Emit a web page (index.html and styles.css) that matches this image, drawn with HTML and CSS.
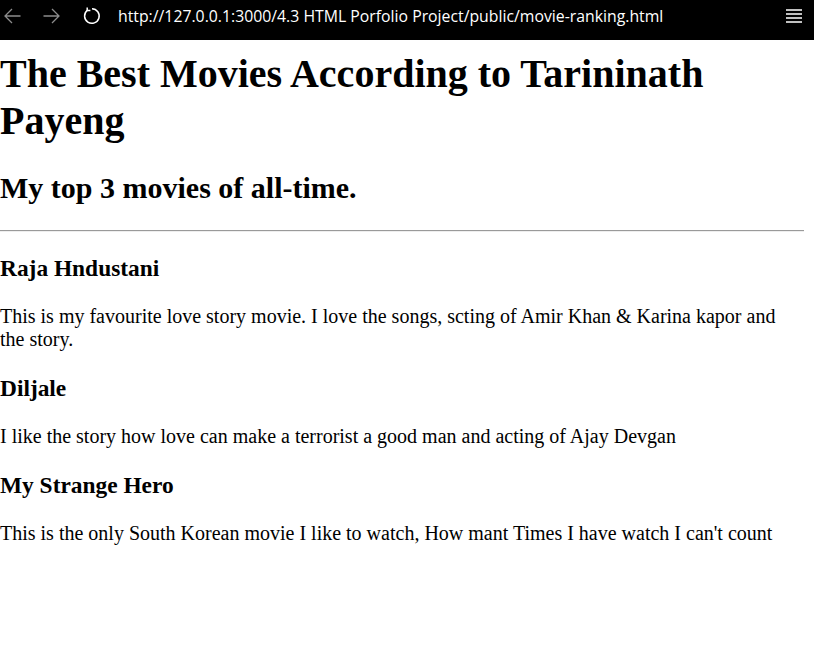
FILE: index.html
```html
<!DOCTYPE html>
<html>
<head>
<meta charset="utf-8">
<link rel="stylesheet" href="styles.css">
</head>
<body>
<div class="bar">
  <svg class="icon back" width="17" height="16" viewBox="0 0 17 16"><path d="M16.5 8H1M8 1L1 8L8 15" fill="none" stroke="#8c8c8c" stroke-width="1.3"/></svg>
  <svg class="icon fwd" width="17" height="16" viewBox="0 0 17 16"><path d="M0.5 8H16M9 1L16 8L9 15" fill="none" stroke="#8c8c8c" stroke-width="1.3"/></svg>
  <svg class="icon reload" width="18" height="18" viewBox="0 0 18 18"><path d="M4.2 3.4A7.3 7.3 0 1 0 9 1.7" fill="none" stroke="#fff" stroke-width="1.5"/><path d="M4.2 0.6V3.6H7.4" fill="none" stroke="#fff" stroke-width="1.5"/></svg>
  <span class="url">http://127.0.0.1:3000/4.3 HTML Porfolio Project/public/movie-ranking.html</span>
  <svg class="icon menu" width="16" height="14" viewBox="0 0 16 14"><path d="M0 1H16M0 5H16M0 9H16M0 13H16" stroke="#fff" stroke-width="1.3"/></svg>
</div>
<main class="page">
  <h1>The Best Movies According to Tarininath Payeng</h1>
  <h2>My top 3 movies of all-time.</h2>
  <hr>
  <h3>Raja Hndustani</h3>
  <p>This is my favourite love story movie. I love the songs, scting of Amir Khan &amp; Karina kapor and the story.</p>
  <h3>Diljale</h3>
  <p>I like the story how love can make a terrorist a good man and acting of Ajay Devgan</p>
  <h3>My Strange Hero</h3>
  <p>This is the only South Korean movie I like to watch, How mant Times I have watch I can't count</p>
</main>
</body>
</html>
```
FILE: styles.css
```css
html, body { margin: 0; padding: 0; background: #fff; }
body { font-family: "Liberation Serif", "Times New Roman", serif; color: #000; font-size: 20px; }
.bar { height: 40px; box-sizing: border-box; padding-bottom: 8px; background: #000; display: flex; align-items: center; color: #fff; font-family: "Open Sans", "Noto Sans", sans-serif; }
.icon { flex: none; display: block; }
.back { margin-left: 4px; }
.fwd { margin-left: 22px; }
.reload { margin-left: 23px; }
.url { font-size: 15.8px; margin-left: 17px; flex: 1; white-space: nowrap; }
.menu { margin-right: 12px; }
.page { width: 804px; }
h1 { font-size: 40px; margin: 10px 0 26.8px; }
h2 { font-size: 30px; }
h3 { font-size: 23.4px; }
hr { margin: 10px 0; border: 0; border-top: 1px solid #9a9a9a; border-bottom: 1px solid #eeeeee; }
```
